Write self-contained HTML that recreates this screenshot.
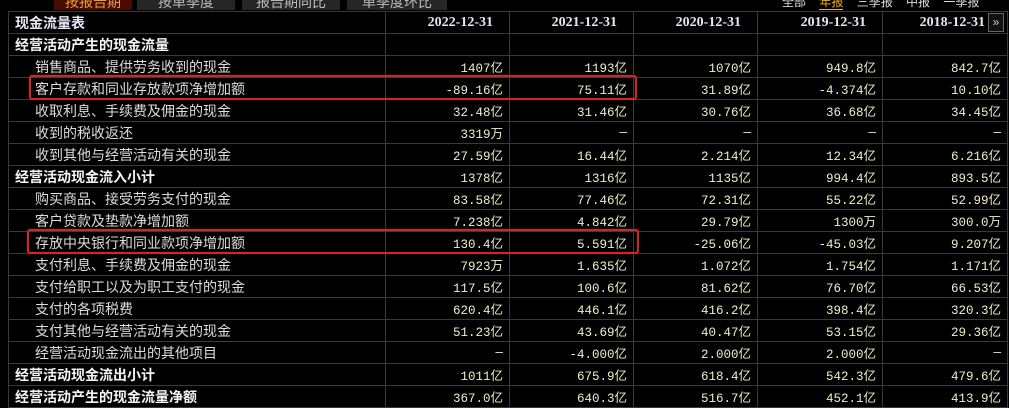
<!DOCTYPE html>
<html><head><meta charset="utf-8"><style>
body{margin:0;background:#000;width:1009px;height:406px;overflow:hidden;position:relative;font-family:"Liberation Sans","Noto Sans CJK SC",sans-serif;}
.tab{position:absolute;top:-6px;height:16px;background:#262626;color:#bbb;font-size:14px;text-align:center;line-height:16px}
.tab.on{background:#4a0c00;color:#e8a040}
table{position:absolute;left:8px;top:11px;border-collapse:collapse;table-layout:fixed;width:999px}
td{border:1px solid #3a3a3a;height:21px;padding:0;font-size:14px;white-space:nowrap;overflow:hidden;box-sizing:border-box}
tr{height:22px}
td.l{color:#dcdcdc;padding-left:26px}
td.b{color:#f4f4f4;font-weight:bold;padding-left:6px}
td.n{text-align:right;padding-right:6px;color:#f0eec8;font-family:"Liberation Mono","Noto Sans CJK SC",monospace;font-size:12.5px}
tr.h td{color:#e6e6f4;font-weight:bold;font-family:"Liberation Serif","Noto Serif CJK SC",serif;font-size:14px;text-align:right;padding-right:16px}
tr.h td:first-child{text-align:left;padding-left:6px;font-family:"Liberation Sans","Noto Sans CJK SC",sans-serif}
.box{position:absolute;border:2px solid #e02020;border-radius:3px}
</style></head><body>
<div class="tab on" style="left:54px;width:78px">按报告期</div>
<div class="tab" style="left:137px;width:98px">按单季度</div>
<div class="tab" style="left:242px;width:98px">报告期同比</div>
<div class="tab" style="left:347px;width:100px">单季度环比</div>
<div style="position:absolute;top:-7px;left:782px;font-size:12px;color:#ddd;white-space:nowrap;word-spacing:10px">全部 <span style="color:#f0b020;border-bottom:1px solid #f0b020">年报</span> 三季报 中报 一季报</div>
<table>
<colgroup><col style="width:377px"><col style="width:124px"><col style="width:124px"><col style="width:124px"><col style="width:125px"><col style="width:125px"></colgroup>
<tr class="h"><td>现金流量表</td><td>2022-12-31</td><td>2021-12-31</td><td>2020-12-31</td><td>2019-12-31</td><td style="padding-right:22px">2018-12-31</td></tr>
<tr><td class="l b">经营活动产生的现金流量</td><td class="n"></td><td class="n"></td><td class="n"></td><td class="n"></td><td class="n"></td></tr>
<tr><td class="l">销售商品、提供劳务收到的现金</td><td class="n">1407亿</td><td class="n">1193亿</td><td class="n">1070亿</td><td class="n">949.8亿</td><td class="n">842.7亿</td></tr>
<tr><td class="l">客户存款和同业存放款项净增加额</td><td class="n">-89.16亿</td><td class="n">75.11亿</td><td class="n">31.89亿</td><td class="n">-4.374亿</td><td class="n">10.10亿</td></tr>
<tr><td class="l">收取利息、手续费及佣金的现金</td><td class="n">32.48亿</td><td class="n">31.46亿</td><td class="n">30.76亿</td><td class="n">36.68亿</td><td class="n">34.45亿</td></tr>
<tr><td class="l">收到的税收返还</td><td class="n">3319万</td><td class="n">—</td><td class="n">—</td><td class="n">—</td><td class="n">—</td></tr>
<tr><td class="l">收到其他与经营活动有关的现金</td><td class="n">27.59亿</td><td class="n">16.44亿</td><td class="n">2.214亿</td><td class="n">12.34亿</td><td class="n">6.216亿</td></tr>
<tr><td class="l b">经营活动现金流入小计</td><td class="n">1378亿</td><td class="n">1316亿</td><td class="n">1135亿</td><td class="n">994.4亿</td><td class="n">893.5亿</td></tr>
<tr><td class="l">购买商品、接受劳务支付的现金</td><td class="n">83.58亿</td><td class="n">77.46亿</td><td class="n">72.31亿</td><td class="n">55.22亿</td><td class="n">52.99亿</td></tr>
<tr><td class="l">客户贷款及垫款净增加额</td><td class="n">7.238亿</td><td class="n">4.842亿</td><td class="n">29.79亿</td><td class="n">1300万</td><td class="n">300.0万</td></tr>
<tr><td class="l">存放中央银行和同业款项净增加额</td><td class="n">130.4亿</td><td class="n">5.591亿</td><td class="n">-25.06亿</td><td class="n">-45.03亿</td><td class="n">9.207亿</td></tr>
<tr><td class="l">支付利息、手续费及佣金的现金</td><td class="n">7923万</td><td class="n">1.635亿</td><td class="n">1.072亿</td><td class="n">1.754亿</td><td class="n">1.171亿</td></tr>
<tr><td class="l">支付给职工以及为职工支付的现金</td><td class="n">117.5亿</td><td class="n">100.6亿</td><td class="n">81.62亿</td><td class="n">76.70亿</td><td class="n">66.53亿</td></tr>
<tr><td class="l">支付的各项税费</td><td class="n">620.4亿</td><td class="n">446.1亿</td><td class="n">416.2亿</td><td class="n">398.4亿</td><td class="n">320.3亿</td></tr>
<tr><td class="l">支付其他与经营活动有关的现金</td><td class="n">51.23亿</td><td class="n">43.69亿</td><td class="n">40.47亿</td><td class="n">53.15亿</td><td class="n">29.36亿</td></tr>
<tr><td class="l">经营活动现金流出的其他项目</td><td class="n">—</td><td class="n">-4.000亿</td><td class="n">2.000亿</td><td class="n">2.000亿</td><td class="n">—</td></tr>
<tr><td class="l b">经营活动现金流出小计</td><td class="n">1011亿</td><td class="n">675.9亿</td><td class="n">618.4亿</td><td class="n">542.3亿</td><td class="n">479.6亿</td></tr>
<tr><td class="l b">经营活动产生的现金流量净额</td><td class="n">367.0亿</td><td class="n">640.3亿</td><td class="n">516.7亿</td><td class="n">452.1亿</td><td class="n">413.9亿</td></tr>
</table>
<div style="position:absolute;left:988px;top:13px;width:14px;height:17px;border:1px solid #666;color:#ccc;font-size:12px;line-height:17px;text-align:center;background:#111">»</div>
<div class="box" style="left:29px;top:75px;width:604px;height:21px"></div>
<div class="box" style="left:27px;top:229px;width:608px;height:21px"></div>
</body></html>
